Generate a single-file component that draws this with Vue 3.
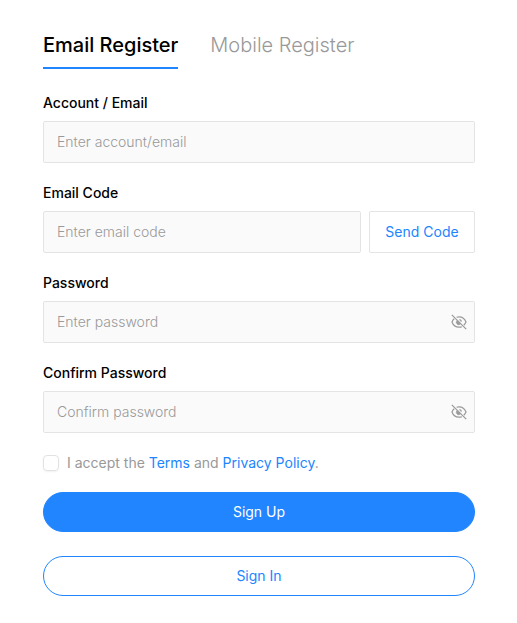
<script setup>
import { ref, reactive } from 'vue'

const tabs = ['Email Register', 'Mobile Register']
const activeTab = ref('Email Register')

const form = reactive({
    account: '',
    code: '',
    password: '',
    confirm: '',
    accept: false
})

const passwords = reactive([
    { key: 'password', label: 'Password', placeholder: 'Enter password', visible: false },
    { key: 'confirm', label: 'Confirm Password', placeholder: 'Confirm password', visible: false }
])
</script>

<template>
    <form class="register" @submit.prevent>
        <div class="tabs">
            <button
                v-for="tab in tabs"
                :key="tab"
                type="button"
                class="tab"
                :class="{ active: tab === activeTab }"
                @click="activeTab = tab"
            >{{ tab }}</button>
        </div>

        <div class="field">
            <label for="account">Account / Email</label>
            <div class="box">
                <input id="account" v-model="form.account" type="text" placeholder="Enter account/email">
            </div>
        </div>

        <div class="field">
            <label for="code">Email Code</label>
            <div class="row">
                <div class="box">
                    <input id="code" v-model="form.code" type="text" placeholder="Enter email code">
                </div>
                <button type="button" class="send">Send Code</button>
            </div>
        </div>

        <div v-for="item in passwords" :key="item.key" class="field">
            <label :for="item.key">{{ item.label }}</label>
            <div class="box">
                <input
                    :id="item.key"
                    v-model="form[item.key]"
                    :type="item.visible ? 'text' : 'password'"
                    :placeholder="item.placeholder"
                >
                <button type="button" class="eye" aria-label="Show password" @click="item.visible = !item.visible">
                    <svg viewBox="0 0 16 16" width="16" height="16" fill="none" stroke="currentColor" stroke-width="1.2">
                        <path d="M5.6 3.2C6.4 2.9 7.2 2.8 8 2.8c3.6 0 6 2.400 7 5.200-.5 1.300-1.200 2.300-2.200 3.200M10.800 12.700c-.9.400-1.800.5-2.800.5-3.600 0-6-2.400-7-5.200.5-1.300 1.200-2.400 2.200-3.300" />
                        <path d="M6 6.600a2.400 2.400 0 0 0 3.400 3.400z" fill="currentColor" stroke-width="0.6" />
                        <path d="M8.400 5.600a2.400 2.400 0 0 1 2 2" />
                        <path d="M.8 .8 15.200 15.200" />
                    </svg>
                </button>
            </div>
        </div>

        <div class="terms">
            <input id="accept" v-model="form.accept" type="checkbox">
            <label for="accept">I accept the <a href="#">Terms</a> and <a href="#">Privacy Policy</a>.</label>
        </div>

        <button type="submit" class="submit primary">Sign Up</button>
        <button type="button" class="submit">Sign In</button>
    </form>
</template>

<style>
body {
    margin: 0;
    background: #fff;
}
</style>

<style scoped>
.register {
    display: flex;
    flex-direction: column;
    padding: 30px 42px 27px 43px;
    font-family: Inter, "Liberation Sans", sans-serif;
    font-size: 14px;
    line-height: 20px;
    color: #000;
}

button,
input {
    box-sizing: border-box;
    margin: 0;
    padding: 0;
    border: 0;
    background: none;
    font: inherit;
    color: inherit;
}

button {
    cursor: pointer;
}

.tabs {
    display: flex;
    gap: 32px;
    margin-bottom: 24px;
}

.tab {
    padding-bottom: 7px;
    border-bottom: 2px solid transparent;
    font-size: 20px;
    line-height: 30px;
    font-weight: 300;
    color: #999;
    white-space: nowrap;
}

.tab.active {
    border-color: #2085ff;
    font-weight: 500;
    color: #000;
}

.field {
    display: flex;
    flex-direction: column;
    gap: 8px;
    margin-bottom: 20px;
}

.field label {
    font-weight: 500;
}

.row {
    display: flex;
    gap: 8px;
}

.box {
    display: flex;
    flex: 1;
    align-items: center;
    box-sizing: border-box;
    height: 42px;
    padding: 0 7px 0 13px;
    border: 1px solid #e4e4e6;
    border-radius: 2px;
    background: #fafafa;
}

.box input {
    flex: 1;
    min-width: 0;
    height: 40px;
    padding-bottom: 2px;
    font-weight: 300;
    outline: none;
}

.box input::placeholder {
    color: #999;
    opacity: 1;
}

.eye {
    display: flex;
    color: #999;
}

.send {
    width: 106px;
    height: 42px;
    border: 1px solid #e4e4e6;
    border-radius: 2px;
    color: #2085ff;
}

.terms {
    display: flex;
    align-items: center;
    gap: 8px;
    margin-bottom: 19px;
    color: #999;
}

.terms input {
    appearance: none;
    width: 16px;
    height: 16px;
    border: 1px solid #e2e2e4;
    border-radius: 4px;
    box-shadow: 0 1px 2px rgba(0, 0, 0, 0.06);
}

.terms input:checked {
    border-color: #2085ff;
    background: #2085ff;
}

.terms a {
    color: #2085ff;
    text-decoration: none;
}

.submit {
    height: 40px;
    border: 1px solid #2085ff;
    border-radius: 20px;
    color: #2085ff;
}

.submit.primary {
    margin-bottom: 24px;
    background: #2085ff;
    color: #fff;
}
</style>
